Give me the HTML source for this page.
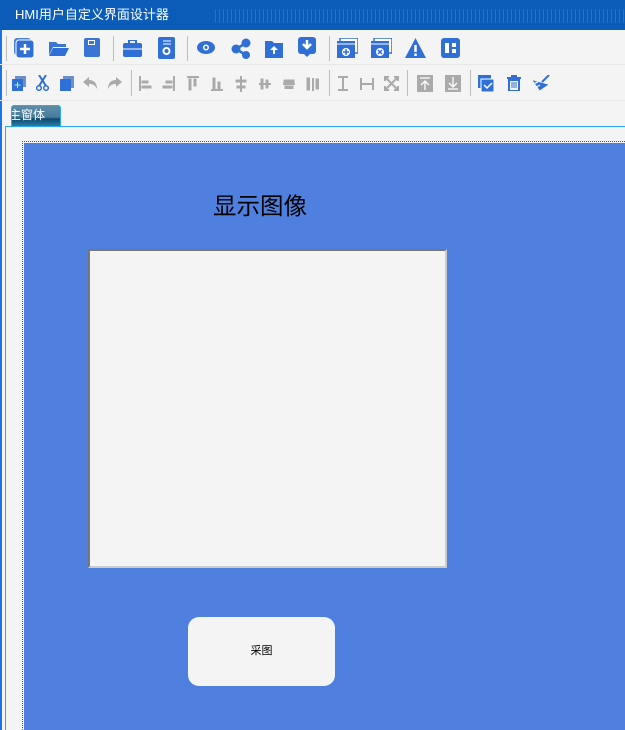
<!DOCTYPE html>
<html style="width:625px;height:730px;overflow:hidden"><head><meta charset="utf-8"><style>
*{margin:0;padding:0;box-sizing:border-box}
body{width:625px;height:730px;overflow:hidden;background:#f4f4f4;position:relative;font-family:"Liberation Sans","Noto Sans CJK SC",sans-serif}
.a{position:absolute}
.title{left:0;top:0;width:625px;height:30px;background:#0b5cb8;color:#fff;font-size:13px;line-height:30px;padding-left:15px}
.sep{width:1px;background:#bdbdbd}
svg.i{position:absolute}
</style></head><body>
<div class="a title">HMI用户自定义界面设计器</div>
<div class="a" style="left:215px;top:9px;width:410px;height:14px;background:repeating-linear-gradient(90deg,rgba(255,255,255,.12) 0 1px,transparent 1px 4px)"></div>
<div class="a" style="left:0;top:30px;width:2px;height:700px;background:#1a73e8"></div>
<div class="a sep" style="left:6px;top:36px;height:25px"></div>
<div class="a sep" style="left:113px;top:36px;height:25px"></div>
<div class="a sep" style="left:187px;top:36px;height:25px"></div>
<div class="a sep" style="left:329px;top:36px;height:25px"></div>
<div class="a" style="left:0;top:64px;width:625px;height:1px;background:#e6e6e6"></div>
<div class="a sep" style="left:6px;top:70px;height:26px"></div>
<div class="a sep" style="left:131px;top:70px;height:26px"></div>
<div class="a sep" style="left:329px;top:70px;height:26px"></div>
<div class="a sep" style="left:407px;top:70px;height:26px"></div>
<div class="a sep" style="left:470px;top:70px;height:26px"></div>
<div class="a" style="left:0;top:100px;width:625px;height:1px;background:#e6e6e6"></div>
<svg class="i" style="left:13px;top:37px" width="22" height="22"><rect x="1" y="1" width="17" height="17" rx="3" fill="#4a80d8"/><rect x="3" y="3" width="18" height="18" rx="3" fill="#2f6fd6" stroke="#fff"/><path d="M12 7v10M7 12h10" stroke="#fff" stroke-width="2.5"/></svg>
<svg class="i" style="left:48px;top:40px" width="22" height="17"><path d="M1 2h7l2 2h8v3H5L1 15z" fill="#3a74d4"/><path d="M5 8h16l-4 8H1z" fill="#2f6fd6"/></svg>
<svg class="i" style="left:84px;top:38px" width="16" height="19"><rect width="16" height="19" rx="2" fill="#3a74d4"/><rect x="4" y="2" width="7" height="5" fill="#fff"/><rect x="5" y="3" width="5" height="3" fill="#3a74d4"/></svg>
<svg class="i" style="left:123px;top:40px" width="19" height="17"><rect x="6" y="0" width="7" height="4" fill="none" stroke="#2f6fd6" stroke-width="2"/><rect y="3" width="19" height="14" rx="2" fill="#2f6fd6"/><path d="M0 9h19" stroke="#fff"/></svg>
<svg class="i" style="left:158px;top:37px" width="17" height="22"><rect width="17" height="22" rx="2" fill="#2f6fd6"/><path d="M5 4h8M5 7h8" stroke="#fff"/><circle cx="8.5" cy="14" r="3" fill="none" stroke="#fff" stroke-width="2"/></svg>
<svg class="i" style="left:197px;top:41px" width="18" height="13"><ellipse cx="9" cy="6.5" rx="9" ry="6.5" fill="#2f6fd6"/><circle cx="9" cy="6.5" r="3" fill="#fff"/><circle cx="9" cy="6.5" r="1.5" fill="#2f6fd6"/></svg>
<svg class="i" style="left:231px;top:38px" width="20" height="21"><path d="M5 11L15 5M5 11l10 6" stroke="#2f6fd6" stroke-width="2.5"/><circle cx="5" cy="11" r="4.5" fill="#2f6fd6"/><circle cx="15" cy="5" r="4.5" fill="#2f6fd6"/><circle cx="15" cy="17" r="4" fill="#2f6fd6"/></svg>
<svg class="i" style="left:265px;top:39px" width="18" height="19"><path d="M0 2h7l2 2h9v15H0z" fill="#2f6fd6"/><path d="M9 7l-4 4h3v4h2v-4h3z" fill="#fff"/></svg>
<svg class="i" style="left:298px;top:37px" width="18" height="20"><rect width="18" height="17" rx="3" fill="#2f6fd6"/><path d="M9 3v7M5 7l4 4 4-4" stroke="#fff" stroke-width="2.5" fill="none"/><path d="M6 17h6l-3 3z" fill="#2f6fd6"/></svg>
<svg class="i" style="left:337px;top:38px" width="21" height="20"><rect x="3" y="0" width="18" height="15" fill="#fff" stroke="#2f6fd6" stroke-width="1.5"/><rect x="0" y="3" width="18" height="17" fill="#2f6fd6"/><path d="M0 6h18" stroke="#fff"/><circle cx="9" cy="14" r="4" fill="#fff"/><path d="M9 11v6M6 14h6" stroke="#2f6fd6" stroke-width="1.5"/></svg>
<svg class="i" style="left:371px;top:38px" width="21" height="20"><rect x="3" y="0" width="18" height="15" fill="#fff" stroke="#2f6fd6" stroke-width="1.5"/><rect x="0" y="3" width="18" height="17" fill="#2f6fd6"/><path d="M0 6h18" stroke="#fff"/><circle cx="9" cy="14" r="4" fill="#fff"/><path d="M7 12l4 4M11 12l-4 4" stroke="#2f6fd6" stroke-width="1.5"/></svg>
<svg class="i" style="left:405px;top:38px" width="21" height="20"><path d="M10.5 0L21 20H0z" fill="#2f6fd6"/><path d="M10.5 7v7" stroke="#fff" stroke-width="2.5"/><rect x="9.3" y="15.5" width="2.5" height="2.5" fill="#fff"/></svg>
<svg class="i" style="left:441px;top:38px" width="19" height="20"><rect width="19" height="20" rx="3" fill="#2f6fd6"/><rect x="4" y="5" width="4" height="10" fill="#fff"/><rect x="11" y="5" width="4" height="4" fill="#fff"/><rect x="11" y="11" width="4" height="4" fill="#fff"/></svg>
<svg class="i" style="left:12px;top:76px" width="14" height="15"><rect x="3" width="11" height="11" fill="#6c90c8"/><rect y="3" width="11" height="12" fill="#2f6fd6"/><path d="M5.5 6v6M2.5 9h6" stroke="#8fd" stroke-width="1"/></svg>
<svg class="i" style="left:36px;top:75px" width="13" height="16"><path d="M3 0l7 11M10 0L3 11" stroke="#2f6fd6" stroke-width="2"/><circle cx="3" cy="13" r="2.3" fill="none" stroke="#2f6fd6" stroke-width="1.5"/><circle cx="10" cy="13" r="2.3" fill="none" stroke="#2f6fd6" stroke-width="1.5"/></svg>
<svg class="i" style="left:60px;top:76px" width="14" height="15"><rect x="3" width="11" height="12" fill="#6c90c8"/><rect y="3" width="11" height="12" fill="#2f6fd6"/></svg>
<svg class="i" style="left:83px;top:77px" width="14" height="12"><path d="M0 5l6-5v3c5 0 8 3 8 9-2-4-4-5-8-5v3z" fill="#aaa"/></svg>
<svg class="i" style="left:108px;top:77px" width="14" height="12"><path d="M14 5L8 0v3C3 3 0 6 0 12c2-4 4-5 8-5v3z" fill="#aaa"/></svg>
<svg class="i" style="left:139px;top:76px" width="220" height="16" fill="#aaa" stroke="#aaa">
<path d="M1 0v15" stroke-width="2"/><rect x="3" y="5" width="6" height="2"/><rect x="3" y="10" width="9" height="2"/>
<path d="M35 0v15" stroke-width="2"/><rect x="27" y="5" width="6" height="2"/><rect x="24" y="10" width="9" height="2"/>
<path d="M48 1h12" stroke-width="2"/><rect x="50" y="3" width="2" height="11"/><rect x="55" y="3" width="2" height="7"/>
<path d="M72 14h12" stroke-width="2"/><rect x="74" y="2" width="2" height="11"/><rect x="79" y="6" width="2" height="7"/>
<path d="M102 0v16" stroke-width="2"/><rect x="97" y="4" width="10" height="2"/><rect x="98" y="10" width="8" height="2"/>
<path d="M120 8h12" stroke-width="2"/><rect x="122" y="3" width="2" height="10"/><rect x="127" y="4" width="2" height="8"/>
<path d="M144 8h12" stroke-width="2"/><rect x="145" y="4" width="10" height="2.5"/><rect x="146" y="10" width="8" height="2.5"/>
<path d="M174 2v13" stroke-width="2"/><rect x="168" y="2" width="2.5" height="12"/><rect x="177" y="3" width="2.5" height="10"/>
</svg>
<svg class="i" style="left:336px;top:76px" width="65" height="16" fill="none" stroke="#aaa" stroke-width="2">
<path d="M2 1h10M7 1v13M2 14h10"/><path d="M25 2v12M37 2v12M25 8h12"/><path d="M49 1l13 13M62 1L49 14M49 5V1h4M58 1h4v4M49 10v4h4M62 10v4h-4"/>
</svg>
<svg class="i" style="left:417px;top:75px" width="16" height="17"><rect width="16" height="17" fill="#aaa"/><path d="M3 3h10M8 6v9M4 10l4-4 4 4" stroke="#fff" stroke-width="1.3" fill="none"/></svg>
<svg class="i" style="left:445px;top:75px" width="16" height="17"><rect width="16" height="17" fill="#aaa"/><path d="M3 14h10M8 2v10M4 8l4 4 4-4" stroke="#fff" stroke-width="1.3" fill="none"/></svg>
<svg class="i" style="left:478px;top:75px" width="16" height="17"><rect x="0" width="13" height="13" fill="#2f6fd6"/><rect x="3" y="4" width="13" height="13" fill="#2f6fd6" stroke="#fff"/><path d="M6 10l3 3 5-5" stroke="#fff" stroke-width="1.5" fill="none"/></svg>
<svg class="i" style="left:507px;top:75px" width="14" height="16"><path d="M0 3h14M5 3V1h4v2" stroke="#2f6fd6" stroke-width="2" fill="none"/><path d="M2 5h10v11H2z" fill="none" stroke="#2f6fd6" stroke-width="2"/><path d="M5 7v6M7 7v6M9 7v6" stroke="#2f6fd6"/></svg>
<svg class="i" style="left:533px;top:75px" width="17" height="16"><path d="M9 7l7-7M2 7l5 7 6-4z" stroke="#2f6fd6" stroke-width="2" fill="#2f6fd6"/><path d="M0 9l5-2M2 13l5-3" stroke="#f4f4f4" stroke-width="1.3"/></svg>
<div class="a" style="left:11px;top:105px;width:50px;height:21px;border:1px solid #2aa9f0;border-bottom:none;border-radius:3px 3px 0 0;background:linear-gradient(#5d8ca8,#4a7d9c 55%,#0c4a72 65%,#2b7ca6);color:#fff;font-size:12px;line-height:18px;overflow:hidden;white-space:nowrap;text-indent:-3px">主窗体</div>
<div class="a" style="left:5px;top:126px;width:620px;height:604px;border:1px solid #2aa9f0;border-right:none;border-bottom:none;background:#f4f4f4"></div>
<div class="a" style="left:22px;top:141px;width:603px;height:589px;border:1px dotted #555;border-right:none;border-bottom:none"></div>
<div class="a" style="left:24px;top:143px;width:601px;height:587px;background:#5080df"></div>
<div class="a" style="left:213px;top:191px;font-size:23.5px;color:#000;line-height:30px;white-space:nowrap">显示图像</div>
<div class="a" style="left:88px;top:249px;width:359px;height:319px;border:2px solid #777;background:#f4f4f4;border-right-color:#ccc;border-bottom-color:#ccc"></div>
<div class="a" style="left:188px;top:617px;width:147px;height:69px;border-radius:11px;background:#f4f4f4;font-size:11px;line-height:69px;text-align:center;color:#000">采图</div>
</body></html>
